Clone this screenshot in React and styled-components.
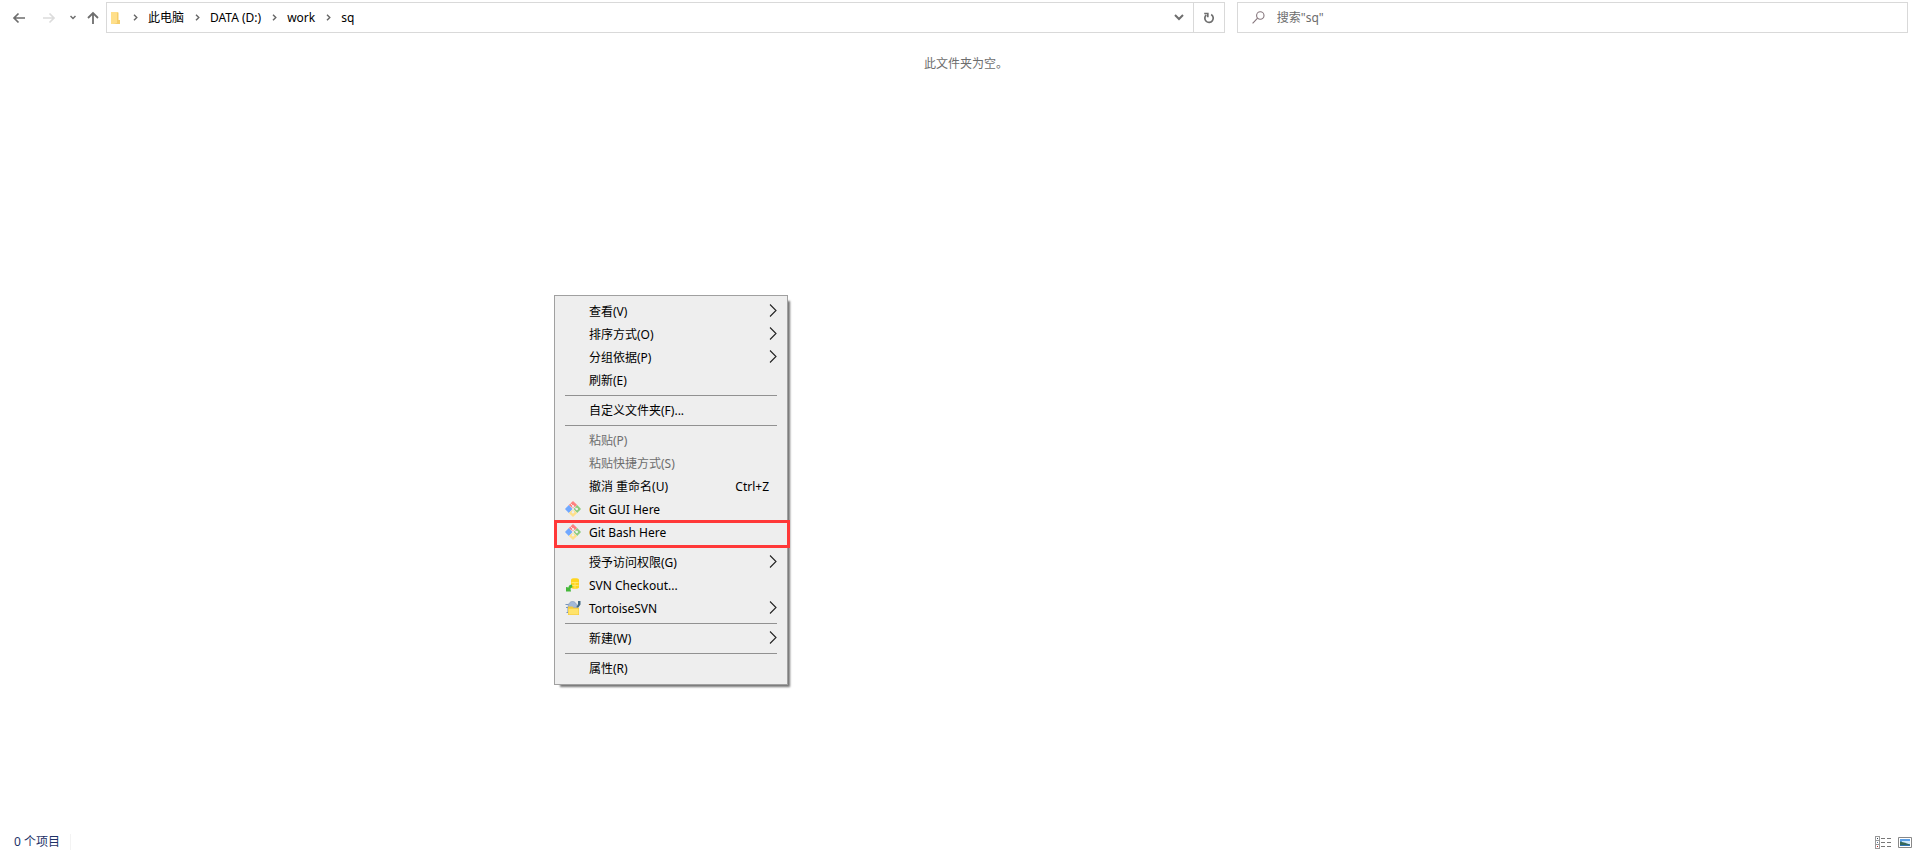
import { Fragment } from "react";
import styled, { createGlobalStyle } from "styled-components";

const GlobalStyle = createGlobalStyle`
  * {
    box-sizing: border-box;
  }
  body {
    margin: 0;
    background: #fff;
    color: #000;
    font: 12px/16px "Noto Sans", "Noto Sans CJK SC", sans-serif;
  }
  button,
  input {
    font: inherit;
    color: inherit;
  }
  svg {
    display: block;
    flex: none;
  }
`;

const Window = styled.div`
  position: relative;
  display: flex;
  flex-direction: column;
  min-height: 100vh;
`;

const Toolbar = styled.header`
  display: flex;
  align-items: center;
  padding: 2px 12px 0 0;
`;

const NavButtons = styled.nav`
  display: flex;
  align-items: center;
  flex: none;
  width: 106px;
  padding-left: 12px;
`;

const Fields = styled.div`
  display: grid;
  grid-template-columns: 5fr 3fr;
  column-gap: 12px;
  flex: 1;
`;

const IconButton = styled.button`
  display: flex;
  align-items: center;
  justify-content: center;
  flex: none;
  width: ${(p) => p.$width}px;
  height: 29px;
  padding: 0;
  border: 0;
  background: none;
  color: ${(p) => (p.disabled ? "#dcdcdc" : "#6e6e6e")};
`;

const AddressBar = styled.div`
  display: flex;
  align-items: center;
  height: 31px;
  padding-left: 3px;
  border: 1px solid #d9d9d9;
`;

const Crumbs = styled.ol`
  display: flex;
  align-items: center;
  flex: 1;
  margin: 0;
  padding: 0;
  list-style: none;
`;

const Crumb = styled.li`
  display: flex;
  align-items: center;
`;

const CrumbLink = styled.a`
  color: #000;
  text-decoration: none;
`;

const CrumbArrow = styled.span`
  display: flex;
  justify-content: center;
  width: 26px;
`;

const RefreshCell = styled.div`
  border-left: 1px solid #d9d9d9;
`;

const SearchBox = styled.label`
  display: flex;
  align-items: center;
  gap: 12px;
  height: 31px;
  padding-left: 14px;
  border: 1px solid #d9d9d9;
`;

const SearchInput = styled.input`
  flex: 1;
  min-width: 0;
  padding: 0;
  border: 0;
  outline: 0;
  background: none;

  &::placeholder {
    color: #6d6d6d;
    opacity: 1;
  }
`;

const FileArea = styled.main`
  flex: 1;
  padding: 23px 0 0 12px;
`;

const EmptyNote = styled.p`
  margin: 0;
  text-align: center;
  color: #6d6d6d;
`;

const StatusBar = styled.footer`
  display: flex;
  align-items: center;
  justify-content: space-between;
  height: 24px;
  padding: 0 8px 0 14px;
`;

const ItemCount = styled.span`
  padding-right: 10px;
  border-right: 1px solid #f3f3f3;
  color: #1e3268;
`;

const ViewButtons = styled.div`
  display: flex;
  gap: 7px;
`;

const ViewButton = styled.button`
  padding: 0;
  border: 0;
  background: none;
`;

const Menu = styled.div`
  position: absolute;
  top: 295px;
  left: 554px;
  width: 234px;
  padding: 4px 0;
  border: 1px solid #a0a0a0;
  background: #eee;
  box-shadow: 4px 4px 2px -2px rgba(0, 0, 0, 0.55);
`;

const MenuItem = styled.button`
  position: relative;
  display: flex;
  align-items: center;
  gap: 8px;
  width: 100%;
  height: 23px;
  padding: 0 10px;
  border: 0;
  background: none;
  text-align: left;

  &:disabled {
    color: #6d6d6d;
  }
`;

const MenuIcon = styled.span`
  width: 16px;
  height: 18px;
`;

const MenuLabel = styled.span`
  flex: 1;
  white-space: nowrap;
`;

const Shortcut = styled.span`
  padding-right: 8px;
`;

const Separator = styled.hr`
  height: 1px;
  margin: 3px 10px;
  border: 0;
  background: #919191;
`;

const Highlight = styled.span`
  position: absolute;
  inset: -1px -3px -4px -1px;
  z-index: 1;
  border: 3px solid #ff3838;
`;

const BackIcon = ({ flip }) => (
  <svg width="14" height="14" viewBox="0 0 14 14" fill="none" stroke="currentColor" strokeWidth="1.7">
    <path d={flip ? "M1 7h11M7.5 2.5 12 7l-4.5 4.5" : "M13 7H2M6.5 2.5 2 7l4.5 4.5"} />
  </svg>
);

const UpIcon = () => (
  <svg width="14" height="14" viewBox="0 0 14 14" fill="none" stroke="currentColor" strokeWidth="1.8">
    <path d="M7 13V2M2 7l5-5 5 5" />
  </svg>
);

const SmallDown = () => (
  <svg width="6" height="5" viewBox="0 0 6 5" fill="none" stroke="currentColor" strokeWidth="1.5">
    <path d="m.5 1 2.5 2.5L5.5 1" />
  </svg>
);

const DropIcon = () => (
  <svg width="10" height="7" viewBox="0 0 10 7" fill="none" stroke="currentColor" strokeWidth="2">
    <path d="m1 1 4 4 4-4" />
  </svg>
);

const RefreshIcon = () => (
  <svg width="12" height="12" viewBox="0 0 12 12" fill="none" stroke="currentColor" strokeWidth="1.7">
    <path d="M8.2 2.6A4.2 4.2 0 1 1 3.3 3" />
    <path d="M1.2 1.5h3.6v3.7" />
  </svg>
);

const FolderIcon = () => (
  <svg width="12" height="14" viewBox="0 0 12 14">
    <path d="M1 1h7v12H1z" fill="#ffe7a0" />
    <path d="M7 1.5h1.5V9H10v4H1l6-1z" fill="#f5cd6a" />
    <path d="M1 1h6v11l-6 1z" fill="#ffdf8a" />
  </svg>
);

const CrumbChevron = () => (
  <svg width="5" height="7" viewBox="0 0 5 7" fill="none" stroke="#666" strokeWidth="1.4">
    <path d="m1 .7 2.8 2.8L1 6.3" />
  </svg>
);

const SearchIcon = () => (
  <svg width="13" height="13" viewBox="0 0 13 13" fill="none" stroke="#85757b" strokeWidth="1.1">
    <circle cx="8.3" cy="4.5" r="3.7" />
    <path d="M5.6 7.2.6 12.3" />
  </svg>
);

const SubmenuArrow = () => (
  <svg width="8" height="15" viewBox="0 0 8 15" fill="none" stroke="#222" strokeWidth="1.1">
    <path d="m1 .5 6 6-6 6" />
  </svg>
);

const GitIcon = () => (
  <svg width="16" height="16" viewBox="0 0 16 16">
    <path d="M8 0l4.2 4L8 7.5 3.8 4z" fill="#ff8080" />
    <path d="M3.8 4 7.5 8l-3.7 4L0 8z" fill="#70a8ff" />
    <path d="M12.2 4 16 8l-3.8 4L8.5 8z" fill="#8dcb7c" />
    <path d="M8 8.5l4.2 3.5L8 16l-4.2-4z" fill="#ffe08a" />
    <path d="M5.5 2.5 8 5v6M8 5l3.5 3" stroke="#eee" fill="none" />
    <circle cx="8" cy="5" r="1.1" fill="#eee" />
    <circle cx="8" cy="11.2" r="1.2" fill="#eee" />
    <circle cx="11.8" cy="8" r="1.2" fill="#eee" />
  </svg>
);

const CheckoutIcon = () => (
  <svg width="16" height="16" viewBox="0 0 16 16">
    <path d="M6 2.5C6 .8 14 .8 14 2.5v8c0 1.8-8 1.8-8 0z" fill="#ffd51f" />
    <path d="M6.5 5.5h7M6.5 8.5h7M10 5v6.5" stroke="#ffe66b" fill="none" />
    <path d="M7 7.5C5 7.5 3.5 8.5 3.5 10.5L1 10v4.5h5L5.5 12c.2-1 .9-1.5 2-1.5z" fill="#45b83a" />
  </svg>
);

const TortoiseIcon = () => (
  <svg width="16" height="16" viewBox="0 0 16 16">
    <path d="M3 8c0-3.5 1.5-6.5 4.5-6.5S12 4.500 12 8z" fill="#a3b9d8" stroke="#7f96b8" strokeWidth=".7" />
    <path d="M.5 4.5h3M1 7.5h2v5H1.5" stroke="#7895b8" fill="none" />
    <path d="M13 1h2.5v3.5L13 8l-1.5-1L13 4z" fill="#416984" />
    <path d="M3 6.5h4.500l1 1.200H14V15H3z" fill="#f3c838" />
    <path d="M3.5 8.7h10v5.800h-10z" fill="#ffe36b" />
  </svg>
);

const DetailsViewIcon = () => (
  <svg width="16" height="13" viewBox="0 0 16 13" fill="none" shapeRendering="crispEdges">
    <path d="M.5.5h4v12h-4zM.5 4.5h4M.5 8.5h4" stroke="#999" />
    <path d="M6 2.5h4M12 2.5h4M6 6.5h4M12 6.5h4M6 10.5h4M12 10.5h4" stroke="#777" />
    <path d="M2 2.5h1" stroke="#345" />
    <path d="M2 6.5h1" stroke="#579" />
    <path d="M2 10.5h1" stroke="#b22" />
  </svg>
);

const LargeViewIcon = () => (
  <svg width="14" height="11" viewBox="0 0 14 11">
    <path d="M.5.5h13v10H.5z" fill="#fff" stroke="#888" />
    <path d="M2 2h10v7H2z" fill="#5b9fe6" />
    <path d="M4 4h8v3H4z" fill="#cfe8fa" />
    <path d="m2 4.5 4 1 6 2V9H2z" fill="#35685a" />
    <path d="M2 8h10v1H2z" fill="#2f74b5" />
  </svg>
);

const crumbs = ["此电脑", "DATA (D:)", "work", "sq"];

const menuGroups = [
  [
    { label: "查看(V)", submenu: true },
    { label: "排序方式(O)", submenu: true },
    { label: "分组依据(P)", submenu: true },
    { label: "刷新(E)" },
  ],
  [{ label: "自定义文件夹(F)..." }],
  [
    { label: "粘贴(P)", disabled: true },
    { label: "粘贴快捷方式(S)", disabled: true },
    { label: "撤消 重命名(U)", shortcut: "Ctrl+Z" },
    { label: "Git GUI Here", icon: GitIcon },
    { label: "Git Bash Here", icon: GitIcon, marked: true },
  ],
  [
    { label: "授予访问权限(G)", submenu: true },
    { label: "SVN Checkout...", icon: CheckoutIcon },
    { label: "TortoiseSVN", icon: TortoiseIcon, submenu: true },
  ],
  [{ label: "新建(W)", submenu: true }],
  [{ label: "属性(R)" }],
];

function ContextMenu() {
  return (
    <Menu role="menu">
      {menuGroups.map((group, i) => (
        <Fragment key={group[0].label}>
          {i > 0 && <Separator />}
          {group.map(({ label, icon: Icon, submenu, shortcut, disabled, marked }) => (
            <MenuItem key={label} type="button" role="menuitem" disabled={disabled}>
              <MenuIcon>{Icon && <Icon />}</MenuIcon>
              <MenuLabel>{label}</MenuLabel>
              {shortcut && <Shortcut>{shortcut}</Shortcut>}
              {submenu && <SubmenuArrow />}
              {marked && <Highlight />}
            </MenuItem>
          ))}
        </Fragment>
      ))}
    </Menu>
  );
}

export default function App() {
  return (
    <Window>
      <GlobalStyle />
      <Toolbar>
        <NavButtons>
          <IconButton type="button" aria-label="后退" $width={14}>
            <BackIcon />
          </IconButton>
          <IconButton type="button" aria-label="前进" $width={46} disabled>
            <BackIcon flip />
          </IconButton>
          <IconButton type="button" aria-label="最近位置" $width={1}>
            <SmallDown />
          </IconButton>
          <IconButton type="button" aria-label="向上" $width={40}>
            <UpIcon />
          </IconButton>
        </NavButtons>
        <Fields>
          <AddressBar>
            <FolderIcon />
            <Crumbs>
              {crumbs.map((name) => (
                <Crumb key={name}>
                  <CrumbArrow>
                    <CrumbChevron />
                  </CrumbArrow>
                  <CrumbLink href="#">{name}</CrumbLink>
                </Crumb>
              ))}
            </Crumbs>
            <IconButton type="button" aria-label="以前的位置" $width={28}>
              <DropIcon />
            </IconButton>
            <RefreshCell>
              <IconButton type="button" aria-label="刷新" $width={30}>
                <RefreshIcon />
              </IconButton>
            </RefreshCell>
          </AddressBar>
          <SearchBox>
            <SearchIcon />
            <SearchInput type="text" aria-label="搜索" placeholder={'搜索"sq"'} />
          </SearchBox>
        </Fields>
      </Toolbar>
      <FileArea>
        <EmptyNote>此文件夹为空。</EmptyNote>
      </FileArea>
      <StatusBar>
        <ItemCount>0 个项目</ItemCount>
        <ViewButtons>
          <ViewButton type="button" aria-label="详细信息">
            <DetailsViewIcon />
          </ViewButton>
          <ViewButton type="button" aria-label="大缩略图">
            <LargeViewIcon />
          </ViewButton>
        </ViewButtons>
      </StatusBar>
      <ContextMenu />
    </Window>
  );
}
